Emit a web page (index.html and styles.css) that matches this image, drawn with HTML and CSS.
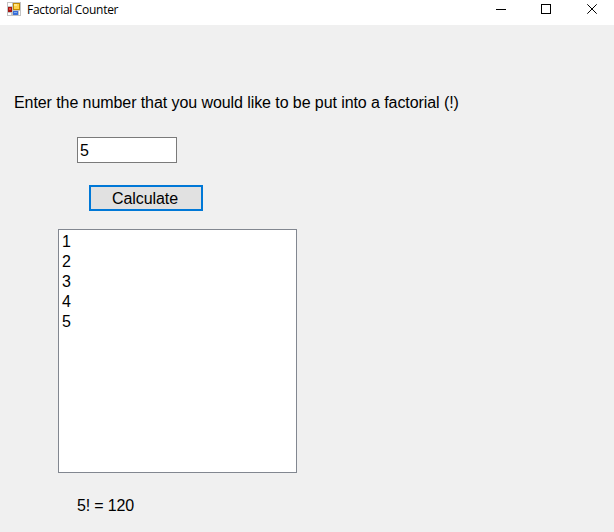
FILE: index.html
```html
<!DOCTYPE html>
<html lang="en">
<head>
<meta charset="utf-8">
<title>Factorial Counter</title>
<link rel="stylesheet" href="styles.css">
</head>
<body>
<header class="titlebar">
  <svg class="app-icon" width="14" height="14" viewBox="0 0 14 14" shape-rendering="crispEdges">
    <path fill="#c3c3c3" d="M0 0h14v14H0z"/>
    <path fill="#fff" d="M1 1h4v3H1zM1 11h3v2H1zM12 9h1v4h-1z"/>
    <path fill="#a51512" d="M1 5h4v5H1z"/>
    <path fill="#e3473c" d="M2 6h2v2H2z"/>
    <path fill="#c28a00" d="M6 1h7v7H6z"/>
    <path fill="#ffd24a" d="M7 2h5v5H7z"/>
    <path fill="#ffe68a" d="M7 2h3v2H7z"/>
    <path fill="#3a6fd8" d="M6 9h5v4H6z"/>
    <path fill="#7eacf5" d="M7 10h3v1H7z"/>
  </svg>
  <h1 class="title">Factorial Counter</h1>
  <svg class="controls" width="138" height="25" viewBox="0 0 138 25" fill="none" stroke="#000">
    <path d="M20 9.5h10M65.500 4.500h9v9h-9z" shape-rendering="crispEdges"/>
    <path d="M111.300 4.300l9.400 9.400M120.700 4.300l-9.400 9.400"/>
  </svg>
</header>
<main class="form">
  <label class="prompt" for="number">Enter the number that you would like to be put into a factorial (!)</label>
  <input class="number" id="number" type="text" value="5">
  <button class="calculate" type="button">Calculate</button>
  <ul class="list">
    <li>1</li>
    <li>2</li>
    <li>3</li>
    <li>4</li>
    <li>5</li>
  </ul>
  <output class="result">5! = 120</output>
</main>
</body>
</html>
```

FILE: styles.css
```css
* {
  box-sizing: border-box;
}

body {
  margin: 0;
  height: 532px;
  overflow: hidden;
  display: flex;
  flex-direction: column;
  background: #f0f0f0;
  color: #000;
  font: 16px/20px "Liberation Sans", Arial, sans-serif;
}

.titlebar {
  display: flex;
  height: 25px;
  flex: none;
  padding-left: 7px;
  background: #fff;
}

.app-icon {
  margin-top: 2px;
}

.title {
  margin: 2px 0 0 6px;
  font: 12px/16px "Open Sans", "Noto Sans", sans-serif;
  letter-spacing: -0.3px;
}

.controls {
  margin-left: auto;
}

.form {
  flex: 1;
  display: flex;
  flex-direction: column;
  align-items: flex-start;
  padding: 68px 0 0 14px;
}

.prompt {
  white-space: nowrap;
  letter-spacing: -0.078px;
}

.number {
  width: 100px;
  height: 26px;
  margin: 24px 0 0 63px;
  padding: 2px 2px 0;
  border: 1px solid #7a7a7a;
  border-radius: 0;
  background: #fff;
  color: #000;
  font: inherit;
}

.calculate {
  width: 114px;
  height: 26px;
  margin: 22px 0 0 75px;
  padding: 2px 2px 0 0;
  border: 2px solid #0078d7;
  border-radius: 0;
  background: #e1e1e1;
  color: #000;
  font: inherit;
  letter-spacing: -0.08px;
}

.list {
  width: 239px;
  height: 244px;
  margin: 18px 0 0 44px;
  padding: 2px 3px;
  border: 1px solid #828790;
  background: #fff;
  list-style: none;
}

.result {
  margin: 23px 0 0 63px;
  letter-spacing: -0.15px;
}
```
